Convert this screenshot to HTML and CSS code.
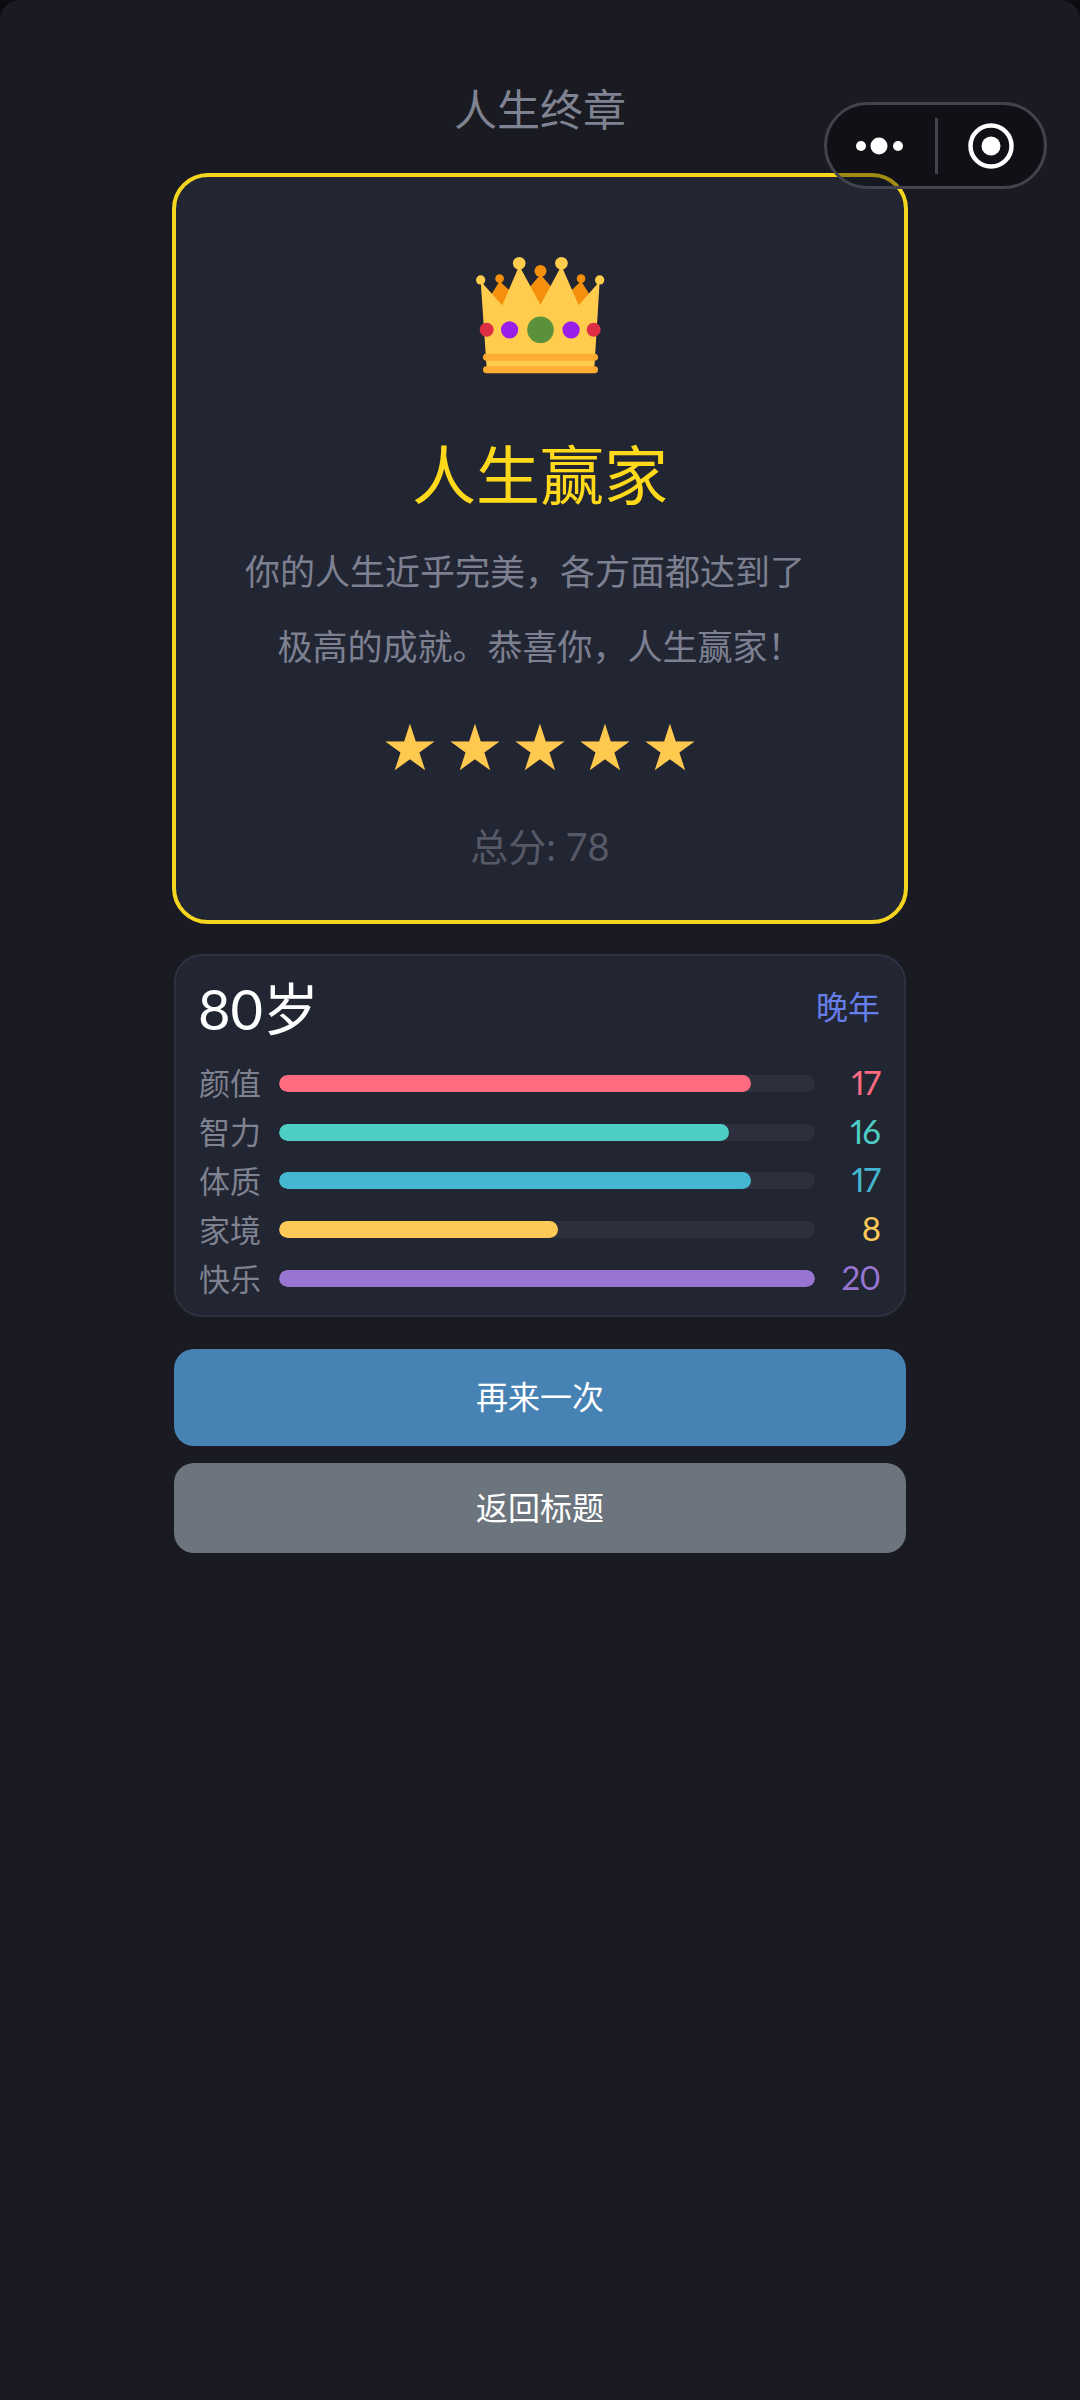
FILE: index.html
```html
<!DOCTYPE html>
<html lang="zh">
    <head>
        <meta charset="utf-8">
        <title>人生终章</title>
        <link rel="stylesheet" href="styles.css">
    </head>
    <body>
        <div class="page">
            <h1 class="page-title">人生终章</h1>

            <div class="capsule">
                <svg class="capsule-more" width="60" height="20" viewBox="0 0 60 20">
                    <circle cx="6" cy="10" r="5" fill="#fff"/>
                    <circle cx="24" cy="10" r="8.5" fill="#fff"/>
                    <circle cx="43" cy="10" r="5" fill="#fff"/>
                </svg>
                <span class="capsule-line"></span>
                <svg class="capsule-close" width="46" height="46" viewBox="0 0 46 46">
                    <circle cx="23" cy="23" r="20.5" fill="none" stroke="#fff" stroke-width="4.5"/>
                    <circle cx="23" cy="23" r="9.5" fill="#fff"/>
                </svg>
            </div>

            <div class="ending-card">
                <svg class="crown" width="133" height="123" viewBox="220 100 400 370">
                    <g fill="#f4900c">
                        <circle cx="297" cy="177" r="13"/>
                        <circle cx="420" cy="154" r="18"/>
                        <circle cx="542" cy="177" r="13"/>
                        <path d="M297 185 L272 225 L305 262 L330 215 Z"/>
                        <path d="M420 165 L385 205 L420 262 L455 205 Z"/>
                        <path d="M542 185 L510 215 L535 262 L568 225 Z"/>
                    </g>
                    <g fill="#ffcc4d">
                        <circle cx="240" cy="181" r="14"/>
                        <circle cx="356" cy="131" r="19"/>
                        <circle cx="483" cy="131" r="19"/>
                        <circle cx="598" cy="181" r="14"/>
                        <path d="M240 185 L305 257 L356 138 L420 256 L483 138 L535 257 L598 185 L582 445 L258 445 Z"/>
                    </g>
                    <g fill="#ffac33">
                        <rect x="247" y="403" width="346" height="21" rx="10.5"/>
                        <rect x="247" y="441" width="346" height="21" rx="10.5"/>
                    </g>
                    <circle cx="258" cy="331" r="21" fill="#dd2e44"/>
                    <circle cx="580" cy="331" r="21" fill="#dd2e44"/>
                    <circle cx="327" cy="331" r="26" fill="#9a1fe8"/>
                    <circle cx="512" cy="331" r="26" fill="#9a1fe8"/>
                    <circle cx="420" cy="331" r="40" fill="#5c913b"/>
                </svg>
                <h2 class="ending-name">人生赢家</h2>
                <p class="ending-desc"><span class="desc-first">你的人生近乎完美，各方面都达到了</span><br>极高的成就。恭喜你，人生赢家！</p>
                <div class="stars">
                    <span>★</span><span>★</span><span>★</span><span>★</span><span>★</span>
                </div>
                <div class="total">总分: 78</div>
            </div>

            <div class="stats-card">
                <div class="stats-head">
                    <span class="age">80岁</span>
                    <span class="stage">晚年</span>
                </div>
                <div class="stat-row">
                    <span class="stat-label">颜值</span>
                    <div class="stat-track"><div class="stat-fill pink" style="width: 88%"></div></div>
                    <span class="stat-value pink-text">17</span>
                </div>
                <div class="stat-row">
                    <span class="stat-label">智力</span>
                    <div class="stat-track"><div class="stat-fill teal" style="width: 84%"></div></div>
                    <span class="stat-value teal-text">16</span>
                </div>
                <div class="stat-row">
                    <span class="stat-label">体质</span>
                    <div class="stat-track"><div class="stat-fill blue" style="width: 88%"></div></div>
                    <span class="stat-value blue-text">17</span>
                </div>
                <div class="stat-row">
                    <span class="stat-label">家境</span>
                    <div class="stat-track"><div class="stat-fill yellow" style="width: 52%"></div></div>
                    <span class="stat-value yellow-text">8</span>
                </div>
                <div class="stat-row">
                    <span class="stat-label">快乐</span>
                    <div class="stat-track"><div class="stat-fill purple" style="width: 100%"></div></div>
                    <span class="stat-value purple-text">20</span>
                </div>
            </div>

            <button class="btn btn-again">再来一次</button>
            <button class="btn btn-back">返回标题</button>
        </div>
    </body>
</html>
```

FILE: styles.css
```css
html, body {
    margin: 0;
    padding: 0;
    background: #0c0c10;
}
body {
    font-family: "Lato", "Noto Sans CJK SC", sans-serif;
}
.page {
    position: relative;
    box-sizing: border-box;
    width: 1080px;
    height: 2400px;
    padding: 0 174px;
    border-radius: 20px 20px 0 0;
    background: #191a22;
    display: flex;
    flex-direction: column;
}
.page-title {
    margin: 82px 0 0;
    height: 56px;
    line-height: 56px;
    font-size: 43px;
    font-weight: 400;
    text-align: center;
    color: #7f8290;
}

/* capsule sits over the card */
.capsule {
    position: absolute;
    top: 102px;
    left: 824px;
    box-sizing: border-box;
    width: 223px;
    height: 87px;
    border: 3px solid #42434c;
    border-radius: 44px;
    background: rgba(0, 0, 0, 0.35);
    z-index: 2;
}
.capsule-more {
    position: absolute;
    top: 31px;
    left: 28px;
}
.capsule-line {
    position: absolute;
    top: 13px;
    left: 108px;
    width: 3px;
    height: 56px;
    background: #42434c;
}
.capsule-close {
    position: absolute;
    top: 18px;
    left: 141px;
}

.ending-card {
    box-sizing: border-box;
    margin: 35px -2px 0;
    height: 751px;
    padding-top: 76px;
    border: 4px solid #f5d51e;
    border-radius: 36px;
    background: #222633;
    display: flex;
    flex-direction: column;
    align-items: center;
}
.crown {
    display: block;
}
.ending-name {
    margin: 59px 0 0;
    line-height: 80px;
    font-size: 64px;
    font-weight: 400;
    color: #ffd91a;
}
.ending-desc {
    margin: 19px 0 0;
    line-height: 75px;
    font-size: 35px;
    font-weight: 400;
    text-align: center;
    color: #7d8090;
}
.desc-first {
    padding-right: 30px;
}
.stars {
    margin-top: 29px;
    display: flex;
}
.stars span {
    width: 65px;
    height: 70px;
    line-height: 70px;
    text-align: center;
    font-family: "DejaVu Sans", sans-serif;
    font-size: 64px;
    color: #ffc94f;
}
.total {
    margin-top: 38px;
    line-height: 50px;
    font-size: 38px;
    font-weight: 400;
    color: #565966;
}

.stats-card {
    box-sizing: border-box;
    margin-top: 30px;
    height: 363px;
    padding: 10px 24px 0 23px;
    border: 2px solid #2e3140;
    border-radius: 28px;
    background: #222633;
}
.stats-head {
    display: flex;
    justify-content: space-between;
    align-items: center;
    height: 78px;
    margin-bottom: 15px;
}
.age {
    margin-left: -1px;
    font-size: 56px;
    color: #fff;
}
.stage {
    font-size: 32px;
    font-weight: 400;
    color: #667eea;
}
.stat-row {
    display: flex;
    align-items: center;
    height: 48.8px;
}
.stat-label {
    width: 80px;
    padding-bottom: 3px;
    font-size: 31px;
    font-weight: 400;
    color: #7f8290;
}
.stat-track {
    flex: 1;
    height: 17px;
    border-radius: 9px;
    background: #2d303c;
    overflow: hidden;
}
.stat-fill {
    height: 100%;
    border-radius: 9px;
}
.stat-value {
    width: 65px;
    padding-bottom: 3px;
    text-align: right;
    font-size: 33px;
    font-weight: 400;
    letter-spacing: -1px;
    font-variant-numeric: proportional-nums;
}
.pink { background: #ff6b81; }
.teal { background: #4ecdc4; }
.blue { background: #45b7d1; }
.yellow { background: #feca57; }
.purple { background: #9775d0; }
.pink-text { color: #ff6b81; }
.teal-text { color: #4ecdc4; }
.blue-text { color: #45b7d1; }
.yellow-text { color: #feca57; }
.purple-text { color: #9775d0; }

.btn {
    display: block;
    width: 100%;
    padding: 0 0 5px;
    border: 0;
    border-radius: 20px;
    font-family: "Lato", "Noto Sans CJK SC", sans-serif;
    font-size: 32px;
    color: #fff;
    text-align: center;
}
.btn-again {
    margin-top: 32px;
    height: 97px;
    background: #4682b4;
}
.btn-back {
    margin-top: 17px;
    height: 90px;
    background: #6c757d;
}
```
